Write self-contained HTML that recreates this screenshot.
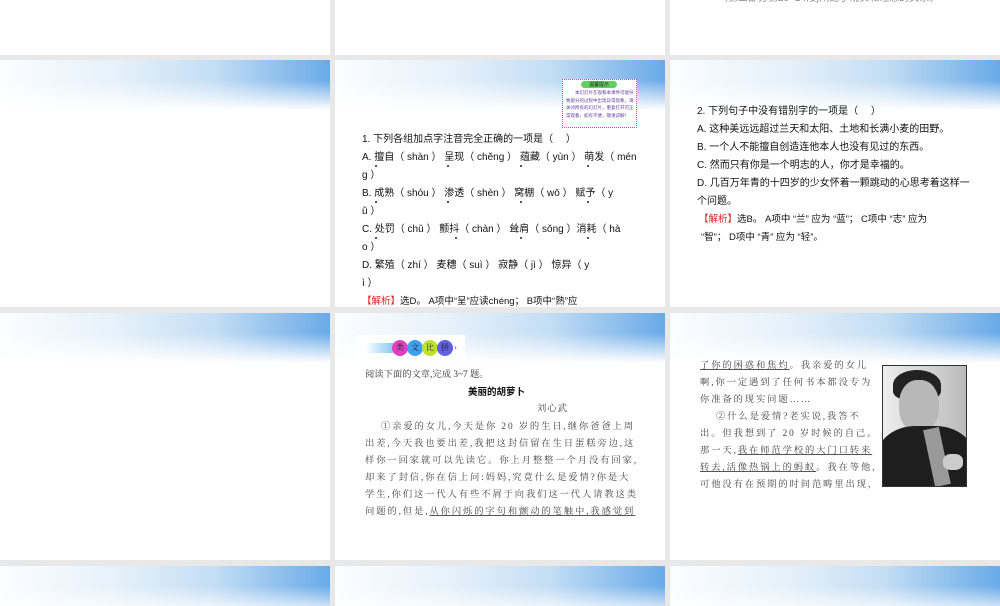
<!DOCTYPE html>
<html><head><meta charset="utf-8"><style>
*{margin:0;padding:0;box-sizing:border-box}
body{width:1000px;height:600px;background:#e8e8e8;position:relative;overflow:hidden;font-family:"Liberation Serif","Noto Serif CJK SC","Noto Sans CJK SC",serif;color:#222}
.s{position:absolute;background:#fff;overflow:hidden}
.hd{position:absolute;left:0;top:0;right:0;height:50px;
background:linear-gradient(to bottom,rgba(255,255,255,0) 0%,rgba(255,255,255,0) 40%,#fff 100%),linear-gradient(to right,#fbfdff 0%,#e6f1fa 35%,#c4def4 65%,#69aae8 100%)}
.t{position:absolute;font-size:10px;line-height:17.7px;white-space:nowrap;font-family:"Liberation Sans","Noto Sans CJK SC",sans-serif;color:#111}
.r{color:#e02020}
.p{position:absolute;font-size:9.3px;line-height:16.7px;white-space:nowrap;color:#444;letter-spacing:1.9px}
u{text-decoration:underline;text-decoration-color:#555}
.d{position:absolute;width:2px;height:2px;background:#222;border-radius:50%}
</style></head><body>
<div class="s" style="left:0;top:0;width:330px;height:55px"></div>
<div class="s" style="left:335px;top:0;width:330px;height:55px"></div>
<div class="s" style="left:670px;top:0;width:330px;height:55px"><div class="t" style="left:48px;top:-10px;color:#888">（第三部分第20~24段)阐述了现实和理想的关系。</div></div>
<div class="s" style="left:0;top:60px;width:330px;height:247px"><div class="hd"></div></div>
<div class="s" style="left:335px;top:60px;width:330px;height:247px"><div class="hd"></div>
<div style="position:absolute;left:227px;top:19px;width:75px;height:49px;background:#fff;border:1px dotted #d040c0"></div>
<div style="position:absolute;left:246px;top:21px;width:36px;height:7px;background:#60d060;border-radius:4px;font-size:5px;color:#222;text-align:center;line-height:7px;font-family:'Noto Sans CJK SC',sans-serif">温馨提示</div>
<div style="position:absolute;left:231px;top:30px;width:68px;font-size:4.5px;line-height:7.5px;color:#6040a0;font-family:'Noto Sans CJK SC',sans-serif">　　本幻灯片在观看本课件可能导致部分的过程中出现异常现象，请关闭所有的幻灯片，重复打开可正常观看，如有不便，敬请谅解！</div>
<div class="t" style="left:27px;top:71px">1. 下列各组加点字注音完全正确的一项是（　 ）</div>
<div class="t" style="left:27px;top:89px">A. 擅自（ shàn ） 呈现（ chěng ） 蕴藏（ yùn ） 萌发（ mén</div>
<div class="t" style="left:27px;top:107px">g ）</div>
<div class="t" style="left:27px;top:125px">B. 成熟（ shóu ） 渗透（ shèn ） 窝棚（ wō ） 赋予（ y</div>
<div class="t" style="left:27px;top:143px">ǔ ）</div>
<div class="t" style="left:27px;top:161px">C. 处罚（ chǔ ） 颤抖（ chàn ） 耸肩（ sǒng ）消耗（ hà</div>
<div class="t" style="left:27px;top:179px">o ）</div>
<div class="t" style="left:27px;top:197px">D. 繁殖（ zhí ） 麦穗（ suì ） 寂静（ jì ） 惊异（ y</div>
<div class="t" style="left:27px;top:215px">ì ）</div>
<div class="d" style="left:375px;top:105px;left:40px"></div><div class="d" style="left:112px;top:105px"></div><div class="d" style="left:185px;top:105px"></div><div class="d" style="left:40px;top:141px"></div><div class="d" style="left:112px;top:141px"></div><div class="d" style="left:185px;top:141px"></div><div class="d" style="left:252px;top:141px"></div><div class="d" style="left:40px;top:177px"></div><div class="d" style="left:120px;top:177px"></div><div class="d" style="left:185px;top:177px"></div><div class="d" style="left:252px;top:177px"></div><div class="d" style="left:252px;top:105px"></div>
<div class="t" style="left:27px;top:233px;font-size:9.5px"><span class="r">【解析】</span>选D。 A项中“呈”应读chéng； B项中“熟”应</div>
</div>
<div class="s" style="left:670px;top:60px;width:330px;height:247px"><div class="hd"></div>
<div class="t" style="left:27px;top:43px">2. 下列句子中没有错别字的一项是（　 ）</div>
<div class="t" style="left:27px;top:61px">A. 这种美远远超过兰天和太阳、土地和长满小麦的田野。</div>
<div class="t" style="left:27px;top:79px">B. 一个人不能擅自创造连他本人也没有见过的东西。</div>
<div class="t" style="left:27px;top:97px">C. 然而只有你是一个明志的人，你才是幸福的。</div>
<div class="t" style="left:27px;top:115px">D. 几百万年青的十四岁的少女怀着一颗跳动的心思考着这样一</div>
<div class="t" style="left:27px;top:133px">个问题。</div>
<div class="t" style="left:29px;top:151px;font-size:9.5px"><span class="r">【解析】</span>选B。 A项中 “兰” 应为 “蓝”； C项中 “志” 应为</div>
<div class="t" style="left:31px;top:169px;font-size:9.5px">“智”； D项中 “青” 应为 “轻”。</div>
</div>
<div class="s" style="left:0;top:313px;width:330px;height:247px"><div class="hd"></div></div>
<div class="s" style="left:335px;top:313px;width:330px;height:247px"><div class="hd"></div>
<div style="position:absolute;left:22px;top:22px;width:108px;height:24px;background:#fff"></div>
<div style="position:absolute;left:30px;top:30px;width:30px;height:10px;background:linear-gradient(to right,#fff,#7fc8ee);border-radius:3px"></div>
<div style="position:absolute;left:57px;top:27px;width:16px;height:16px;border-radius:50%;background:#e040c0;font-size:8px;line-height:16px;text-align:center;color:#222">类</div>
<div style="position:absolute;left:72px;top:27px;width:16px;height:16px;border-radius:50%;background:#40a0f0;font-size:8px;line-height:16px;text-align:center;color:#222">文</div>
<div style="position:absolute;left:87px;top:27px;width:16px;height:16px;border-radius:50%;background:#c0e030;font-size:8px;line-height:16px;text-align:center;color:#222">比</div>
<div style="position:absolute;left:102px;top:27px;width:16px;height:16px;border-radius:50%;background:#6060e0;font-size:8px;line-height:16px;text-align:center;color:#222">拼</div>
<div style="position:absolute;left:119px;top:29px;font-size:9px;color:#e03030">›</div>
<div class="p" style="left:30px;top:54px;letter-spacing:0;color:#333">阅读下面的文章,完成 3~7 题。</div>
<div class="t" style="left:133px;top:71px;font-weight:bold;font-size:9.5px">美丽的胡萝卜</div>
<div class="p" style="left:202px;top:88px;letter-spacing:1px">刘心武</div>
<div class="p" style="left:46px;top:106px">①亲爱的女儿,今天是你 20 岁的生日,继你爸爸上周</div>
<div class="p" style="left:30px;top:123px">出差,今天我也要出差,我把这封信留在生日蛋糕旁边,这</div>
<div class="p" style="left:30px;top:140px">样你一回家就可以先读它。你上月整整一个月没有回家,</div>
<div class="p" style="left:30px;top:157px">却来了封信,你在信上问:妈妈,究竟什么是爱情?你是大</div>
<div class="p" style="left:30px;top:174px">学生,你们这一代人有些不屑于向我们这一代人请教这类</div>
<div class="p" style="left:30px;top:191px">问题的,但是,<u>从你闪烁的字句和颤动的笔触中,我感觉到</u></div>
</div>
<div class="s" style="left:670px;top:313px;width:330px;height:247px"><div class="hd"></div>
<div class="p" style="left:30px;top:45px"><u>了你的困惑和焦灼</u>。我亲爱的女儿</div>
<div class="p" style="left:30px;top:62px">啊,你一定遇到了任何书本都没专为</div>
<div class="p" style="left:30px;top:79px">你准备的现实问题……</div>
<div class="p" style="left:46px;top:96px">②什么是爱情?老实说,我答不</div>
<div class="p" style="left:30px;top:113px">出。但我想到了 20 岁时候的自己。</div>
<div class="p" style="left:30px;top:130px">那一天,<u>我在师范学校的大门口转来</u></div>
<div class="p" style="left:30px;top:147px"><u>转去,活像热锅上的蚂蚁</u>。我在等他,</div>
<div class="p" style="left:30px;top:164px">可他没有在预期的时间范畴里出现,</div>
<div style="position:absolute;left:212px;top:52px;width:85px;height:122px;border:1px solid #333;overflow:hidden;background:linear-gradient(to right,#eee,#bbb)">
<div style="position:absolute;left:10px;top:4px;width:48px;height:30px;border-radius:50% 50% 30% 30%;background:#222"></div>
<div style="position:absolute;left:16px;top:14px;width:40px;height:52px;border-radius:45%;background:#b8b8b8"></div>
<div style="position:absolute;left:-5px;top:60px;width:95px;height:70px;border-radius:40% 40% 0 0;background:#1e1e1e"></div>
<div style="position:absolute;left:46px;top:62px;width:16px;height:58px;background:#999;transform:rotate(-12deg)"></div>
<div style="position:absolute;left:60px;top:88px;width:20px;height:16px;border-radius:40%;background:#ccc"></div>
</div>
</div>
<div class="s" style="left:0;top:566px;width:330px;height:40px"><div class="hd"></div></div>
<div class="s" style="left:335px;top:566px;width:330px;height:40px"><div class="hd"></div></div>
<div class="s" style="left:670px;top:566px;width:330px;height:40px"><div class="hd"></div></div>
</body></html>
